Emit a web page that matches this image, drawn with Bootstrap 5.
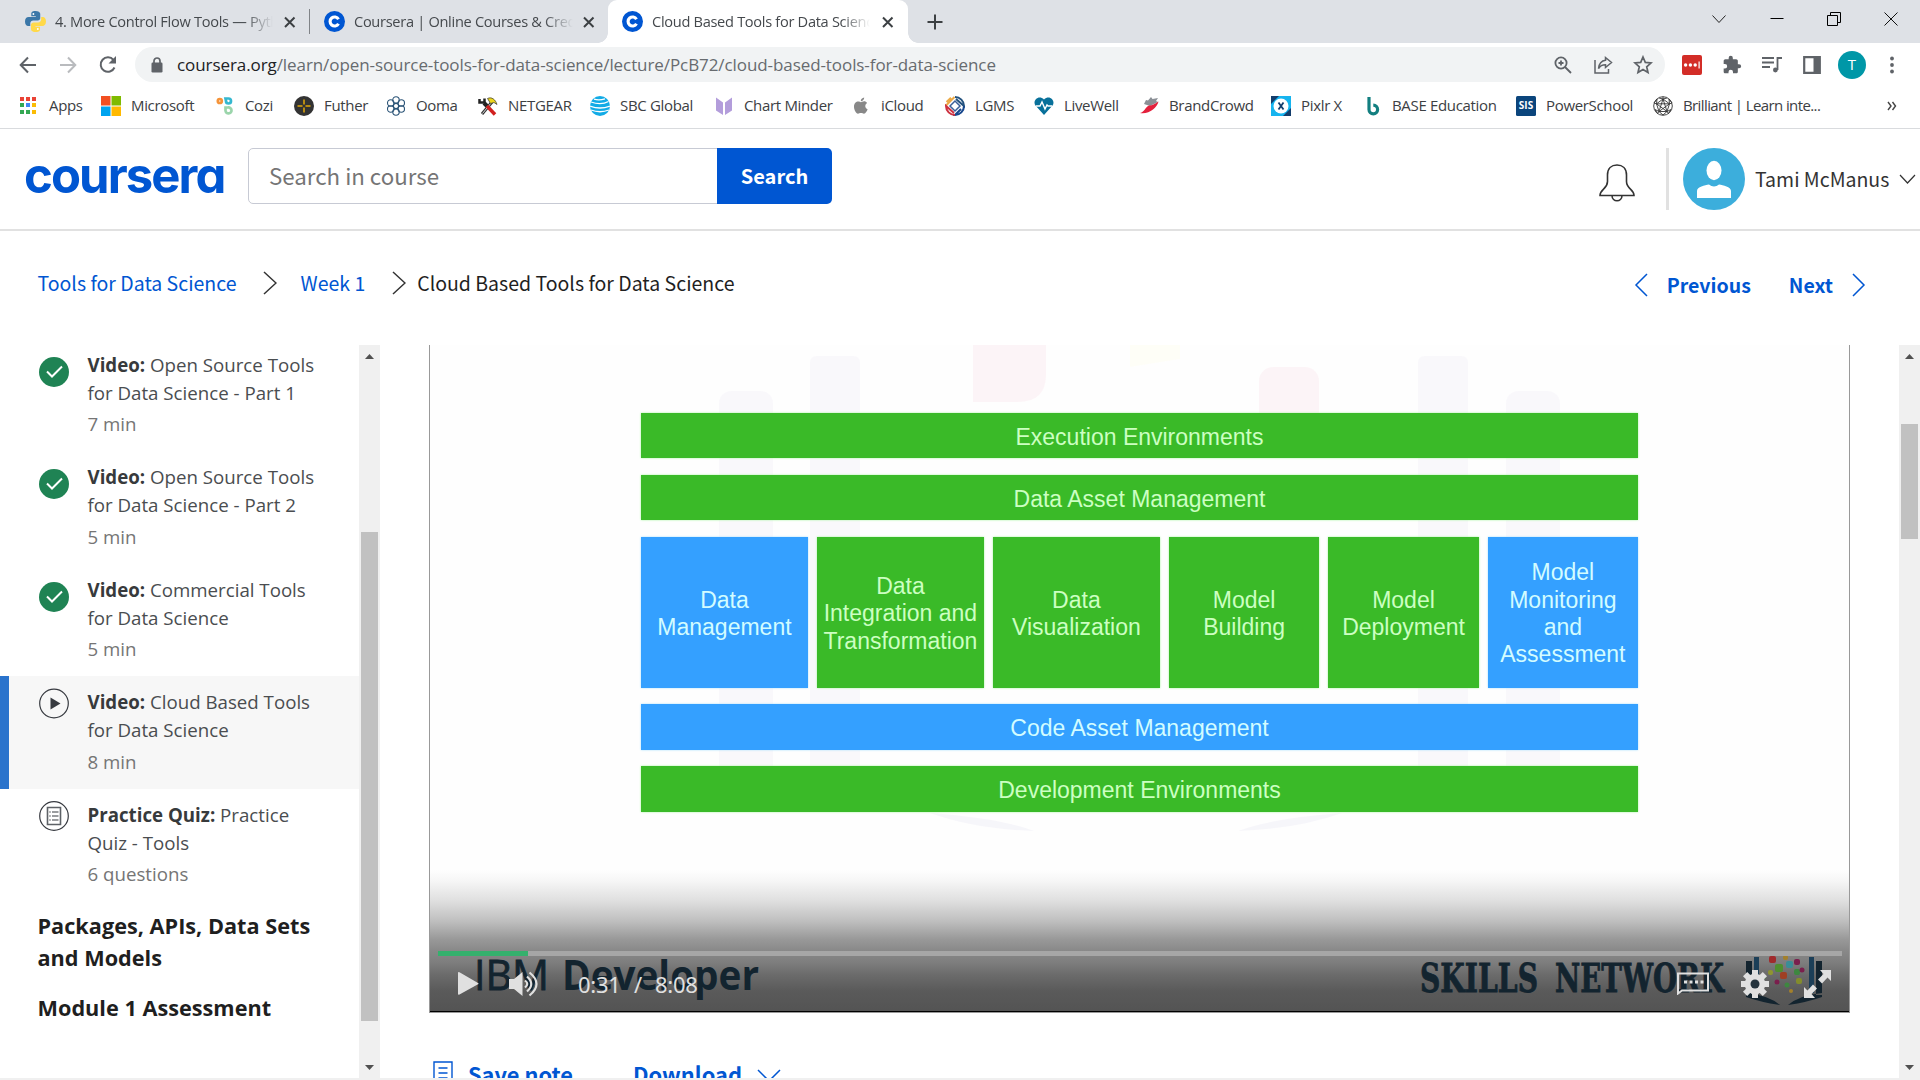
<!DOCTYPE html>
<html lang="en">
<head>
<meta charset="utf-8">
<title>Cloud Based Tools for Data Science | Coursera</title>
<link href="https://cdn.jsdelivr.net/npm/bootstrap@5.3.0/dist/css/bootstrap.min.css" rel="stylesheet">
<style>
  html, body { height: 1080px; overflow: hidden; }
  body { font-family: "Open Sans", sans-serif; background: #fff; color: #1f1f1f; }
  svg { display: block; flex: none; }
  a { text-decoration: none; }
  .source { font-family: "Noto Sans CJK SC", "Noto Sans", sans-serif; }

  /* browser tabs */
  .tabstrip { height: 43px; background: #dee1e6; }
  .tab { height: 43px; font-size: 14.6px; letter-spacing: -.3px; color: #45494d; }
  .tab-label { overflow: hidden; white-space: nowrap; -webkit-mask-image: linear-gradient(90deg, #000 87%, transparent); mask-image: linear-gradient(90deg, #000 87%, transparent); }
  .tab-a { width: 309px; padding-left: 25px; }
  .tab-a .tab-label { width: 218px; margin-left: 9px; margin-right: 7px; }
  .tab-b { width: 298px; padding-left: 14px; }
  .tab-b .tab-label { width: 219px; margin-left: 9px; margin-right: 6px; }
  .tab-on { width: 300px; padding-left: 14px; background: #fff; border-radius: 9px 9px 0 0; position: relative; }
  .tab-on::before, .tab-on::after { content: ""; position: absolute; bottom: 0; width: 10px; height: 10px; }
  .tab-on::before { left: -10px; background: radial-gradient(circle at 0 0, transparent 9.5px, #fff 10px); }
  .tab-on::after { right: -10px; background: radial-gradient(circle at 100% 0, transparent 9.5px, #fff 10px); }
  .tab-on .tab-label { width: 218px; margin-left: 9px; margin-right: 8px; }
  .tab-sep { width: 1px; height: 25px; background: #808387; }
  .win { width: 57.3px; height: 38px; }

  /* address row */
  .toolbar { height: 43px; padding-left: 8px; }
  .tool { width: 40px; height: 40px; }
  .omnibox { width: 1530px; height: 35px; border-radius: 18px; background: #f1f3f4; margin-right: 7px; margin-left: 7px; padding: 0 2px 0 15px; }
  .url { font-size: 17px; letter-spacing: -.08px; color: #676b6f; margin-left: 13px; padding-top: 1px; }
  .url b { font-weight: 400; color: #202124; }
  .profile { width: 28px; height: 28px; border-radius: 50%; background: #0097a7; color: #fff; font-size: 15px; }

  .bookmarks { height: 43px; padding-left: 19px; padding-bottom: 3px; border-bottom: 1px solid #d9dbde; font-size: 15px; letter-spacing: -.33px; color: #3c4043; }
  .bm { gap: 10px; white-space: nowrap; width: 82px; }
  .bm:nth-child(2) { width: 114px; } .bm:nth-child(3) { width: 79px; }
  .bm:nth-child(4), .bm:nth-child(5) { width: 92px; } .bm:nth-child(6) { width: 112px; }
  .bm:nth-child(7) { width: 124px; } .bm:nth-child(8) { width: 137px; }
  .bm:nth-child(9) { width: 94px; } .bm:nth-child(10) { width: 89px; }
  .bm:nth-child(11) { width: 105px; } .bm:nth-child(12) { width: 132px; }
  .bm:nth-child(13) { width: 91px; } .bm:nth-child(14) { width: 154px; }
  .bm:nth-child(15) { width: 137px; } .bm:nth-child(16) { width: 234px; letter-spacing: -.6px; }

  /* site header */
  .site-head { height: 102px; border-bottom: 2px solid #e1e1e1; padding-left: 24px; }
  .brand-word { font-family: Inter, sans-serif; font-feature-settings: "cv11"; font-weight: 700; font-size: 49px; letter-spacing: -1.9px; line-height: 60px; color: #0056d2; width: 224px; margin-top: -7px; }
  .search { width: 584px; height: 56px; margin-top: -6px; }
  .search .form-control { border: 1px solid #c7cad4; border-radius: 5px 0 0 5px; padding: 0 20px; font-size: 22.3px; color: #757575; }
  .search .form-control::placeholder { color: #757575; }
  .search .btn { width: 115px; background: #0056d2; color: #fff; font-weight: 700; font-size: 20px; border: 0; border-radius: 0 5px 5px 0; }
  .head-rule { width: 3px; height: 62px; background: #e1e1e1; margin: 0 14px 0 31px; }
  .bell { margin-top: 7px; }
  .user-name { font-size: 19.5px; color: #333; width: 144px; margin-left: 10px; white-space: nowrap; }

  .crumbs { height: 114px; padding: 0 54px 11px 37.5px; font-size: 19.5px; }
  .crumbs a { color: #0056d2; }
  .c2 { margin: 0 24px 0 26px; } .c4 { margin: 0 11px 0 27px; }
  .c6 { margin-left: 19px; } .c7 { margin: 0 19px 0 38px; }

  .panes { height: 733px; overflow: hidden; }
  .side { width: 359px; overflow: hidden; }
  .lesson { height: 112.5px; padding: 12.2px 20px 0 38.5px; font-size: 18.7px; line-height: 28.2px; color: #4a4d50; gap: 19px; white-space: nowrap; }
  .lesson:first-child { margin-top: -6.5px; }
  .lesson svg { margin-top: 6px; }
  .lesson .todo { margin-top: 0; }
  .lesson strong { color: #373a3c; font-weight: 700; }
  .lesson .meta { color: #757575; margin-top: 3px; }
  .lesson-on { background: #f7f7f7; border-left: 9px solid #2a73cc; padding-left: 29.5px; }
  .side-head { font-size: 21.7px; font-weight: 700; line-height: 32px; margin: 0 0 18px 37.5px; white-space: nowrap; }
  .side-head-first { padding-top: 9px; }
  .sbar { background: #f0f0f0; flex: none; width: 21px; }
  .thumb { background: #c1c1c1; width: 17px; }
  .sbar-l .thumb { height: 489px; } .sbar-r .thumb { height: 115px; }

  .watch { padding-left: 49px; }
  .player { width: 1421px; height: 668px; border: 1px solid #999; border-top: 0; background: #fefefe; position: relative; }
  .slide-art, .shade { position: absolute; left: 0; top: 0; }
  .slide-art { opacity: .5; }
  .shade { right: 0; bottom: 0; border-bottom: 1px solid #000; background: linear-gradient(180deg, transparent 525px, #f6f6f6 536px, #dfdfdf 556px, #bfbfbf 576px, #999 594px, #888 606px, #7e7e7e 617px, #6c6c6c 629px, #5a5a5a 646px, #545454 665px); }
  .diagram { position: relative; padding: 67.5px 211px 0; gap: 16.5px; font-family: "Liberation Sans", sans-serif; font-size: 23px; line-height: 27.4px; text-align: center; }
  .blk { background: #3aba28; color: #ccffc2; box-shadow: 0 0 2px #a6f5a0; padding-top: 4px; }
  .blk-blue { background: #34a0ff; color: #d2fcff; box-shadow: 0 0 2px #a5e0ff; }
  .band { height: 45.5px; }
  .cells { gap: 9.1px; height: 151px; }
  .cw { width: 167px; } .cn { width: 150.4px; }
  .controls { position: absolute; left: 0; right: 0; bottom: 1px; height: 60px; color: #e0e0e0; }
  .track { height: 5px; margin: 0 7px 0 8px; background: #a6a6a6; }
  .played { height: 5px; background: #35b06d; }
  .ctl { height: 55px; padding: 0 18px 0 28px; font-family: "Noto Sans", sans-serif; }
  .clock { font-size: 22px; letter-spacing: -.3px; white-space: pre; padding-top: 1px; }
  .k1 { margin-left: 30px; } .k2 { margin-left: 39px; width: 56px; } .k3 { width: 21px; } .k4 { width: 50px; }
  .k5 { margin-left: 32px; } .k6 { margin-left: 35px; }
  .actions { padding: 44px 0 0 4px; color: #0056d2; font-weight: 700; font-size: 21.8px; line-height: 33px; }
  .a0 { margin-top: 4px; } .a1 { margin-left: 15px; width: 165px; } .a2 { width: 124px; } .a3 { margin-top: 12px; }
  .foot { height: 2px; background: #f0f0f0; }
</style>
<script src="https://cdn.jsdelivr.net/npm/bootstrap@5.3.0/dist/js/bootstrap.bundle.min.js"></script>
</head>
<body class="d-flex flex-column">

<div class="tabstrip d-flex">
  <div class="tab tab-a d-flex align-items-center">
    <svg width="21" height="21" viewBox="0 0 20 20"><path fill="#3b77a8" d="M10 0C6.500 0 6 1.500 6 2.700V5h4.300v.8H3.500C1.500 5.800 0 7.200 0 10s1.300 4.300 3 4.300h2v-2.500c0-1.600 1.300-2.800 2.800-2.800h4.400c1.300 0 2.300-1.100 2.300-2.400V2.700C14.500 1 12.600 0 10 0z"/><path fill="#ffd94a" d="M10.300 20c3.500 0 4-1.500 4-2.700V15H10v-.8h6.500c2 0 3.500-1.400 3.500-4.200s-1.300-4.300-3-4.300h-1.600v2.500c0 1.600-1.300 2.800-2.800 2.800H8.200c-1.300 0-2.500 1.100-2.500 2.400v3.900c0 1.700 2 2.700 4.600 2.700z"/><circle cx="8" cy="2.800" r=".9" fill="#fff"/><circle cx="12.200" cy="17.200" r=".9" fill="#fff"/></svg>
    <span class="tab-label">4. More Control Flow Tools — Python 3</span>
    <svg width="20" height="20" viewBox="0 0 20 20" stroke="#3c4043" stroke-width="2"><path d="M5 5.500l9.500 9.500M14.500 5.500L5 15"/></svg>
  </div>
  <div class="tab-sep align-self-center"></div>
  <div class="tab tab-b d-flex align-items-center">
    <svg width="21" height="21" viewBox="0 0 20 20"><circle cx="10" cy="10" r="10" fill="#0056d2"/><path d="M13.800 12.200a4.300 4.300 0 1 1 0-4.400" fill="none" stroke="#fff" stroke-width="3"/></svg>
    <span class="tab-label">Coursera | Online Courses &amp; Credentials</span>
    <svg width="20" height="20" viewBox="0 0 20 20" stroke="#3c4043" stroke-width="2"><path d="M5 5.500l9.500 9.500M14.500 5.500L5 15"/></svg>
  </div>
  <div class="tab tab-on d-flex align-items-center">
    <svg width="21" height="21" viewBox="0 0 20 20"><circle cx="10" cy="10" r="10" fill="#0056d2"/><path d="M13.800 12.200a4.300 4.300 0 1 1 0-4.400" fill="none" stroke="#fff" stroke-width="3"/></svg>
    <span class="tab-label">Cloud Based Tools for Data Science</span>
    <svg width="20" height="20" viewBox="0 0 20 20" stroke="#3c4043" stroke-width="2"><path d="M5 5.500l9.500 9.500M14.500 5.500L5 15"/></svg>
  </div>
  <svg class="ms-3 align-self-center" width="22" height="22" viewBox="0 0 22 22" stroke="#3c4043" stroke-width="2"><path d="M11 3.500v15M3.500 11h15"/></svg>
  <div class="ms-auto d-flex">
    <div class="win d-flex align-items-center justify-content-center"><svg width="14" height="10" viewBox="0 0 14 10" fill="none" stroke="#222"><path d="M.5 1.500L7 8.500l6.500-7"/></svg></div>
    <div class="win d-flex align-items-center justify-content-center"><svg width="14" height="10" viewBox="0 0 14 10" stroke="#000"><path d="M.5 4.500h13"/></svg></div>
    <div class="win d-flex align-items-center justify-content-center"><svg width="14" height="14" viewBox="0 0 14 14" fill="none" stroke="#000"><path d="M.5 3.500h10v10H.5zM3.500 3V.5h10v10H11"/></svg></div>
    <div class="win d-flex align-items-center justify-content-center"><svg width="14" height="14" viewBox="0 0 14 14" stroke="#111"><path d="M.5.5l13 13M13.500.5l-13 13"/></svg></div>
  </div>
</div>

<div class="toolbar d-flex align-items-center">
  <div class="tool d-flex align-items-center justify-content-center"><svg width="18" height="18" viewBox="0 0 18 18" fill="none" stroke="#5f6368" stroke-width="2"><path d="M17 9H2M9 1.500L1.700 9 9 16.500"/></svg></div>
  <div class="tool d-flex align-items-center justify-content-center"><svg width="18" height="18" viewBox="0 0 18 18" fill="none" stroke="#b9bbbe" stroke-width="2"><path d="M1 9h15M9 1.500L16.300 9 9 16.500"/></svg></div>
  <div class="tool d-flex align-items-center justify-content-center"><svg width="20" height="20" viewBox="0 0 20 20"><path d="M16.500 12.500A7.200 7.200 0 1 1 15.500 5" fill="none" stroke="#5f6368" stroke-width="2"/><path d="M18 1v7.500h-7.500z" fill="#5f6368"/></svg></div>
  <div class="omnibox d-flex align-items-center">
    <svg width="14" height="16" viewBox="0 0 14 16"><rect x="1.500" y="5.500" width="11" height="10" rx="1.200" fill="#5f6368"/><path d="M4 6V4a3 3 0 0 1 6 0v2" fill="none" stroke="#5f6368" stroke-width="1.700"/></svg>
    <span class="url flex-grow-1"><b>coursera.org</b>/learn/open-source-tools-for-data-science/lecture/PcB72/cloud-based-tools-for-data-science</span>
    <div class="tool d-flex align-items-center justify-content-center"><svg width="18" height="18" viewBox="0 0 18 18" fill="none" stroke="#5f6368" stroke-width="1.800"><circle cx="7" cy="7" r="5.600"/><path d="M11 11l6 6M7 4.500v5M4.500 7h5"/></svg></div>
    <div class="tool d-flex align-items-center justify-content-center"><svg width="20" height="20" viewBox="0 0 20 20" fill="none" stroke="#5f6368" stroke-width="1.500"><path d="M2 5v13h13.500v-4M12.500 2.500l6 5-6 5V9.800C9 9.800 7 11 5.500 13.500 6 9 8.500 5.800 12.500 5.300z"/></svg></div>
    <div class="tool d-flex align-items-center justify-content-center"><svg width="20" height="20" viewBox="0 0 20 20" fill="none" stroke="#5f6368" stroke-width="1.700"><path d="M10 2l2.300 5.400 5.800.5-4.400 3.900 1.300 5.700-5-3-5 3 1.300-5.700L1.900 7.900l5.800-.5z"/></svg></div>
  </div>
  <div class="tool d-flex align-items-center justify-content-center"><svg width="20" height="20" viewBox="0 0 20 20"><rect width="20" height="20" rx="2" fill="#d32d27"/><g fill="#fff"><circle cx="3.600" cy="10" r="1.700"/><circle cx="8.400" cy="10" r="1.700"/><circle cx="13.200" cy="10" r="1.700"/><rect x="16.500" y="6.500" width="1.200" height="7"/></g></svg></div>
  <div class="tool d-flex align-items-center justify-content-center"><svg width="20" height="20" viewBox="0 0 24 24" fill="#5f6368"><path d="M20.500 11H19V7c0-1.100-.9-2-2-2h-4V3.500a2.500 2.500 0 0 0-5 0V5H4c-1.100 0-2 .9-2 2v3.800h1.500a2.700 2.700 0 0 1 0 5.400H2V20c0 1.100.9 2 2 2h3.800v-1.500a2.700 2.700 0 0 1 5.400 0V22H17c1.100 0 2-.9 2-2v-4h1.500a2.500 2.500 0 0 0 0-5z"/></svg></div>
  <div class="tool d-flex align-items-center justify-content-center"><svg width="20" height="20" viewBox="0 0 20 20" fill="none" stroke="#5f6368" stroke-width="1.800"><path d="M0 3h12M0 7.500h12M0 12h8M15.500 15V3h4.500"/><circle cx="13.400" cy="15" r="2.400" fill="#5f6368" stroke="none"/></svg></div>
  <div class="tool d-flex align-items-center justify-content-center"><svg width="18" height="18" viewBox="0 0 18 18"><path d="M1.200 1.200h15.600v15.600H1.200z" fill="none" stroke="#5f6368" stroke-width="2.200"/><path d="M10.500 1h6.500v16h-6.500z" fill="#5f6368"/></svg></div>
  <div class="tool d-flex align-items-center justify-content-center"><div class="profile d-flex align-items-center justify-content-center">T</div></div>
  <div class="tool d-flex align-items-center justify-content-center"><svg width="4" height="18" viewBox="0 0 4 18" fill="#5f6368"><circle cx="2" cy="2.500" r="1.900"/><circle cx="2" cy="9" r="1.900"/><circle cx="2" cy="15.500" r="1.900"/></svg></div>
</div>

<div class="bookmarks d-flex align-items-center">
  <div class="bm d-flex align-items-center"><svg width="20" height="20" viewBox="0 0 20 20"><path fill="#ea4335" d="M1 1h4v4H1zM7 1h4v4H7zM13 1h4v4h-4z"/><path fill="#34a853" d="M1 7h4v4H1zM1 14h4v4H1zM7 14h4v4H7z"/><path fill="#4285f4" d="M7 7h4v4H7z"/><path fill="#fbbc05" d="M13 7h4v4h-4zM13 14h4v4h-4z"/></svg>Apps</div>
  <div class="bm d-flex align-items-center"><svg width="20" height="20" viewBox="0 0 20 20"><path fill="#f25022" d="M0 0h9.500v9.500H0z"/><path fill="#7fba00" d="M10.500 0H20v9.500h-9.500z"/><path fill="#00a4ef" d="M0 10.500h9.500V20H0z"/><path fill="#ffb900" d="M10.500 10.500H20V20h-9.500z"/></svg>Microsoft</div>
  <div class="bm d-flex align-items-center"><svg width="20" height="20" viewBox="0 0 20 20" fill="none" stroke-width="2.700"><circle cx="4.800" cy="5" r="2" stroke="#f5943a"/><path d="M10.500 2.500h3a2.500 2.500 0 1 1-2.500 2.500z" stroke="#35b8d0"/><path d="M10.500 11.500h2.500a3 3 0 1 1-2.500 3z" stroke="#9bd5ab"/></svg>Cozi</div>
  <div class="bm d-flex align-items-center"><svg width="20" height="20" viewBox="0 0 20 20"><circle cx="10" cy="10" r="10" fill="#333"/><path d="M10 3.500v5M10 11.500v5M3.500 10h5M11.500 10h5" stroke="#e3a908" stroke-width="1.500"/></svg>Futher</div>
  <div class="bm d-flex align-items-center"><svg width="20" height="20" viewBox="0 0 20 20" fill="none" stroke="#2b5477" stroke-width="1.100"><circle cx="10" cy="10" r="2.600"/><circle cx="10" cy="3.900" r="3.200"/><circle cx="10" cy="16.100" r="3.200"/><circle cx="4.700" cy="7" r="3.200"/><circle cx="15.300" cy="7" r="3.200"/><circle cx="4.700" cy="13" r="3.200"/><circle cx="15.300" cy="13" r="3.200"/></svg>Ooma</div>
  <div class="bm d-flex align-items-center"><svg width="20" height="20" viewBox="0 0 20 20" fill="none"><path d="M4 18L14 6" stroke="#333" stroke-width="3"/><path d="M4.500 17.500L13.500 6.500" stroke="#ddd" stroke-width="1"/><path d="M6 7l3 3" stroke="#222" stroke-width="4"/><path d="M9 10l8 8.500" stroke="#d1201f" stroke-width="3.500"/><path d="M1.500 3v3.500h5V2.500" stroke="#222" stroke-width="2.500"/><path d="M9.500 2.500c4-2 8 1 9.500 6l-3-2-3.500 1z" fill="#ecd51c" stroke="#333" stroke-width=".7"/></svg>NETGEAR</div>
  <div class="bm d-flex align-items-center"><svg width="20" height="20" viewBox="0 0 20 20"><circle cx="10" cy="10" r="10" fill="#12abe6"/><path d="M1 6q10 3.500 17.500-.5M0 10q10 4 20 0M1 14q9 3.500 18 0M4 3.200q5 1.500 11-.3" fill="none" stroke="#fff" stroke-width="1.300"/></svg>SBC Global</div>
  <div class="bm d-flex align-items-center"><svg width="20" height="20" viewBox="0 0 20 20" fill="#b39ddb"><path d="M2 1.500l7 5V19l-7-4.500zM18 1.500l-7 5V19l7-4.500z"/></svg>Chart Minder</div>
  <div class="bm d-flex align-items-center"><svg width="20" height="20" viewBox="0 0 20 20" fill="#888"><path d="M13.200 1.500c.1 2-1.500 3.700-3.400 3.700C9.600 3.300 11.300 1.700 13.200 1.500zM9.900 6.200c.7 0 1.700-.9 3.200-.9 1.200 0 2.300.6 3 1.700-2.700 1.600-2.200 5.200.5 6.300-.6 1.700-2 4.400-3.600 4.400-1.200 0-1.500-.7-3-.7s-1.900.7-3 .7C5 17.700 3 13.800 3 10.800c0-3.400 2.200-5.200 4.200-5.200 1.200 0 2 .6 2.700.6z"/></svg>iCloud</div>
  <div class="bm d-flex align-items-center"><svg width="20" height="20" viewBox="0 0 20 20" fill="none" stroke-width="2"><path d="M1 9.500L9.500 1M1.500 6L6 1.800" stroke="#ecaa47"/><path d="M10 1a9 9 0 0 1 9 9L11 3" stroke="#24527e"/><path d="M19 10a9 9 0 0 1-9 9l6-6" stroke="#17478d"/><path d="M10 19a9 9 0 0 1-9-9l8 7" stroke="#cd3241"/><path d="M5 10l5-5 5 5-5 5z" stroke="#3a5f99" stroke-width="1.500"/></svg>LGMS</div>
  <div class="bm d-flex align-items-center"><svg width="20" height="20" viewBox="0 0 20 20"><path d="M10 19L1.500 9.500C-2 5 4.500-2 10 3.500 15.500-2 22 5 18.500 9.500z" fill="#08709a"/><path d="M2 10h4l2-4 3 7 2-4 1 1h4" fill="none" stroke="#fff" stroke-width="1.400"/></svg>LiveWell</div>
  <div class="bm d-flex align-items-center"><svg width="20" height="20" viewBox="0 0 20 20"><path d="M5 8l2-4 2 .5L12 1l1.500 2L19 2l-2 3 2 1-8 4z" fill="#8b9096"/><path d="M1 17c5-1 5-6 9-7.500 2 .5 5-1 9.500-4C18 12 10 18.500 1 17z" fill="#e4203c"/></svg>BrandCrowd</div>
  <div class="bm d-flex align-items-center"><svg width="20" height="20" viewBox="0 0 20 20"><path d="M0 0h20v20H0z" fill="#16b4ef"/><path d="M0 0h8L0 8zM12 20h8v-8z" fill="#133d6c"/><circle cx="10" cy="10" r="7.500" fill="#fff"/><path d="M7.500 6.500l5 7M12.500 6.500l-5 7" stroke="#133d6c" stroke-width="1.800"/></svg>Pixlr X</div>
  <div class="bm d-flex align-items-center"><svg width="20" height="20" viewBox="0 0 20 20" fill="none" stroke="#137f80" stroke-width="3.200"><path d="M7 1v12.500a4.300 4.300 0 1 0 4.300-4.300"/></svg>BASE Education</div>
  <div class="bm d-flex align-items-center"><svg width="20" height="20" viewBox="0 0 20 20"><rect width="20" height="20" rx="1.500" fill="#0b457c"/><text x="10" y="13.400" text-anchor="middle" font-family="Open Sans" font-weight="700" font-size="10" letter-spacing="0" fill="#fff">SIS</text></svg>PowerSchool</div>
  <div class="bm d-flex align-items-center"><svg width="20" height="20" viewBox="0 0 20 20" fill="none" stroke="#333" stroke-width=".9"><circle cx="10" cy="10" r="9.300"/><path d="M10 3l6.500 4.800L14 15.500H6L3.500 7.800zM10 .7V3l-4-1M10 3l4-1M16.500 7.800l2.500-.8-3-4zM14 15.500l1.500 2 2.500-4zM6 15.500l-1.500 2-2.500-4zM3.500 7.800L1 7l3-4zM10 3L6 15.500l10.500-7.700h-13L14 15.500zM6 15.500l4 3.500 4-3.500"/></svg>Brilliant | Learn inte...</div>
  <svg width="10" height="10" viewBox="0 0 10 10" fill="none" stroke="#444" stroke-width="1.400"><path d="M1 1l3 4-3 4M5.500 1l3 4-3 4"/></svg>
</div>

<header class="site-head d-flex align-items-center">
  <a class="brand-word" href="#">coursera</a>
  <div class="search input-group source">
    <input class="form-control" type="text" placeholder="Search in course">
    <button class="btn" type="button">Search</button>
  </div>
  <div class="ms-auto d-flex align-items-center">
    <svg class="bell" width="36" height="38" viewBox="0 0 36 38" fill="none" stroke="#333" stroke-width="1.600"><path d="M1 31.500C1 25 8.500 25 8.500 17.500V11C8.500 4.500 12.500 1 18 1s9.500 3.500 9.500 10v6.500C27.500 25 35 25 35 31.500zM13 31.500c0 7 10 7 10 0"/></svg>
    <div class="head-rule"></div>
    <svg width="62" height="62" viewBox="0 0 62 62"><circle cx="31" cy="31" r="31" fill="#3caedc"/><ellipse cx="31" cy="22.500" rx="7.500" ry="9.700" fill="#fff"/><path d="M14 50V43c0-4 8-6 12-6.500 3 2.500 7 2.500 10 0C40 37 48 39 48 43v7z" fill="#fff"/></svg>
    <span class="user-name source">Tami McManus</span>
    <svg class="me-1" width="17" height="10" viewBox="0 0 17 10" fill="none" stroke="#333" stroke-width="1.200"><path d="M1 1l7.500 8L16 1"/></svg>
  </div>
</header>

<nav class="crumbs source d-flex align-items-center">
  <a class="c1" href="#">Tools for Data Science</a>
  <svg class="c2" width="14" height="24" viewBox="0 0 14 24" fill="none" stroke="#333" stroke-width="1.500"><path d="M1 1l12 11L1 23"/></svg>
  <a class="c3" href="#">Week 1</a>
  <svg class="c4" width="14" height="24" viewBox="0 0 14 24" fill="none" stroke="#333" stroke-width="1.500"><path d="M1 1l12 11L1 23"/></svg>
  <span class="c5">Cloud Based Tools for Data Science</span>
  <div class="ms-auto pt-1 d-flex align-items-center fw-bold">
    <svg width="14" height="24" viewBox="0 0 14 24" fill="none" stroke="#0056d2" stroke-width="1.500"><path d="M13 1L2 12l11 11"/></svg>
    <a class="c6" href="#">Previous</a>
    <a class="c7" href="#">Next</a>
    <svg width="14" height="24" viewBox="0 0 14 24" fill="none" stroke="#0056d2" stroke-width="1.500"><path d="M1 1l11 11L1 23"/></svg>
  </div>
</nav>

<div class="panes d-flex">
  <aside class="side flex-shrink-0">
    <div class="lesson d-flex"><svg width="30" height="30" viewBox="0 0 30 30"><circle cx="15" cy="15" r="15" fill="#1f8354"/><path d="M8 14.500l5 5L23 9.500" fill="none" stroke="#fff" stroke-width="2"/></svg><div><strong>Video:</strong> Open Source Tools<br>for Data Science - Part 1<div class="meta">7 min</div></div></div>
    <div class="lesson d-flex"><svg width="30" height="30" viewBox="0 0 30 30"><circle cx="15" cy="15" r="15" fill="#1f8354"/><path d="M8 14.500l5 5L23 9.500" fill="none" stroke="#fff" stroke-width="2"/></svg><div><strong>Video:</strong> Open Source Tools<br>for Data Science - Part 2<div class="meta">5 min</div></div></div>
    <div class="lesson d-flex"><svg width="30" height="30" viewBox="0 0 30 30"><circle cx="15" cy="15" r="15" fill="#1f8354"/><path d="M8 14.500l5 5L23 9.500" fill="none" stroke="#fff" stroke-width="2"/></svg><div><strong>Video:</strong> Commercial Tools<br>for Data Science<div class="meta">5 min</div></div></div>
    <div class="lesson lesson-on d-flex"><svg class="todo" width="30" height="31" viewBox="0 0 30 31"><circle cx="15" cy="15.500" r="14.300" fill="none" stroke="#373a40" stroke-width="1.200"/><path d="M11.500 9.500l10 6-10 6z" fill="#373a40"/></svg><div><strong>Video:</strong> Cloud Based Tools<br>for Data Science<div class="meta">8 min</div></div></div>
    <div class="lesson d-flex"><svg class="todo" width="30" height="30" viewBox="0 0 30 30" fill="none" stroke="#373a40"><circle cx="15" cy="15" r="14.300" stroke-width="1.200"/><path d="M8.500 6.500h13v17h-13z" stroke="#5d6166" stroke-width="1.600"/><path d="M13 11h6.500M13 15h6.500M13 19h6.500M10.300 11h1.400M10.300 15h1.400M10.300 19h1.400" stroke-width="1.200"/></svg><div><strong>Practice Quiz:</strong> Practice<br>Quiz - Tools<div class="meta">6 questions</div></div></div>
    <div class="side-head side-head-first">Packages, APIs, Data Sets<br>and Models</div>
    <div class="side-head">Module 1 Assessment</div>
  </aside>
  <div class="sbar sbar-l d-flex flex-column align-items-center">
    <svg width="21" height="187" viewBox="0 0 21 187"><path d="M6 14l4.500-5 4.500 5z" fill="#505050"/></svg>
    <div class="thumb"></div>
    <svg class="mt-auto" width="21" height="20" viewBox="0 0 21 20"><path d="M6 7l4.500 5L15 7z" fill="#505050"/></svg>
  </div>
  <main class="watch flex-grow-1">
    <div class="player">
      <svg class="slide-art" width="1419" height="500" viewBox="0 0 1419 500">
        <g fill="#f6f4fa"><rect x="289" y="46" width="54" height="420" rx="12"/><rect x="380" y="11" width="50" height="420" rx="6"/><rect x="988" y="11" width="50" height="420" rx="6"/><rect x="1076" y="46" width="54" height="420" rx="12"/></g>
        <path d="M543 0h73v30q0 27-28 27h-45z" fill="#fbecf1"/><rect x="829" y="22" width="60" height="80" rx="14" fill="#fbecf1"/><path d="M700 0h50v14l-50 8z" fill="#fffef2"/>
        <path d="M500 468q70 5 104 18-60-2-104-18zM912 468q-70 5-104 18 60-2 104-18z" fill="#f0eff7"/>
      </svg>
      <div class="diagram d-flex flex-column">
        <div class="blk band d-flex align-items-center justify-content-center">Execution Environments</div>
        <div class="blk band d-flex align-items-center justify-content-center">Data Asset Management</div>
        <div class="cells d-flex">
          <div class="blk blk-blue cw d-flex align-items-center justify-content-center">Data<br>Management</div>
          <div class="blk cw d-flex align-items-center justify-content-center">Data<br>Integration and<br>Transformation</div>
          <div class="blk cw d-flex align-items-center justify-content-center">Data<br>Visualization</div>
          <div class="blk cn d-flex align-items-center justify-content-center">Model<br>Building</div>
          <div class="blk cn d-flex align-items-center justify-content-center">Model<br>Deployment</div>
          <div class="blk blk-blue cn d-flex align-items-center justify-content-center">Model<br>Monitoring<br>and<br>Assessment</div>
        </div>
        <div class="blk blk-blue band d-flex align-items-center justify-content-center">Code Asset Management</div>
        <div class="blk band d-flex align-items-center justify-content-center">Development Environments</div>
      </div>
      <div class="shade">
        <svg width="1419" height="666" viewBox="0 0 1419 666" fill="#13242f">
          <g font-family="Open Sans" font-size="42"><text x="44" y="645" stroke="#13242f" stroke-width=".8" textLength="75" lengthAdjust="spacingAndGlyphs">IBM</text><text x="132" y="645" font-weight="700" textLength="197" lengthAdjust="spacingAndGlyphs">Developer</text></g>
          <g font-family="DejaVu Serif" font-weight="700" font-size="40" stroke="#13242f" stroke-width=".9"><text x="990" y="647" textLength="118" lengthAdjust="spacingAndGlyphs">SKILLS</text><text x="1125" y="647" textLength="169" lengthAdjust="spacingAndGlyphs">NETWORK</text></g>
          <path d="M1316 616h6v34h-6zM1386 616h6v34h-6zM1316 648q22 2 34 12-20-3-34-8zM1392 648q-22 2-34 12 20-3 34-8z"/><path d="M1324 612h5v36h-5zM1379 612h5v36h-5z" fill="#1c3f58"/>
          <g><rect x="1339" y="611" width="7" height="7" rx="2" fill="#a02a2c"/><rect x="1353" y="610" width="5" height="5" rx="2" fill="#a3802b"/><rect x="1364" y="614" width="6" height="6" rx="2" fill="#7a1f4d"/><rect x="1345" y="619" width="8" height="8" rx="2" fill="#4f8f2f"/><rect x="1356" y="616" width="7" height="7" rx="2" fill="#3a8d96"/><rect x="1364" y="624" width="6" height="6" rx="2" fill="#3e8740"/><rect x="1350" y="627" width="7" height="7" rx="2" fill="#9f4024"/><rect x="1338" y="625" width="5" height="5" rx="2" fill="#8f9530"/><rect x="1366" y="633" width="6" height="6" rx="2" fill="#838c2c"/><circle cx="1347" cy="637" r="2.500" fill="#7a1f4d"/><circle cx="1372" cy="625" r="2.500" fill="#7a1f4d"/><circle cx="1357" cy="640" r="2.500" fill="#3e8740"/><circle cx="1361" cy="646" r="2" fill="#a3802b"/><circle cx="1334" cy="632" r="2" fill="#3e8740"/></g>
        </svg>
      </div>
      <div class="controls">
        <div class="track"><div class="played" style="width:6.420%"></div></div>
        <div class="ctl d-flex align-items-center">
          <svg width="21" height="23" viewBox="0 0 21 23" fill="#e0e0e0"><path d="M0 1q0-1.500 1.500-.7L20 11q1 .7 0 1.200L1.500 22.500Q0 23 0 22z"/></svg>
          <svg class="k1" width="30" height="26" viewBox="0 0 30 26" fill="none" stroke="#e0e0e0" stroke-width="2.200"><path d="M0 8h5L13.500 1v24L5 18H0z" fill="#e0e0e0" stroke="none"/><path d="M16 9.500q4.500 3.500 0 7M18 5.500q8.500 7.500 0 15M20.500 1.500q14 11.500 0 23"/></svg>
          <span class="clock k2">0:31</span><span class="clock k3">/</span><span class="clock k4">8:08</span>
          <svg class="ms-auto" width="32" height="23" viewBox="0 0 32 23" fill="none" stroke="#e0e0e0" stroke-width="2"><path d="M1 21.500V1.500h30v17H5z"/><path d="M7 10h3M12.500 10h3M18 10h3M23.500 10h3" stroke-width="3"/></svg>
          <svg class="k5" width="28" height="28" viewBox="-14 -14 28 28" fill="#e0e0e0"><path d="M-3-14h6v28h-6z"/><path d="M-3-14h6v28h-6z" transform="rotate(45)"/><path d="M-3-14h6v28h-6z" transform="rotate(90)"/><path d="M-3-14h6v28h-6z" transform="rotate(135)"/><circle r="10.300"/><circle r="4.500" fill="#24343e"/></svg>
          <svg class="k6" width="27" height="28" viewBox="0 0 27 28"><path d="M16 0h11v11l-3.500-3.500L18 13.500l-4-4L19.500 4zM11 28H0V17l3.500 3.500L9 14.500l4 4L7.500 24z" fill="#e0e0e0"/></svg>
        </div>
      </div>
    </div>
    <div class="actions source d-flex align-items-start">
      <svg class="a0" width="20" height="26" viewBox="0 0 20 26" fill="none" stroke="#0056d2" stroke-width="1.400"><path d="M1 1h18v24H1zM5.500 7h9M5.500 12h9M5.500 17h9"/></svg>
      <span class="a1">Save note</span><span class="a2">Download</span>
      <svg class="a3" width="24" height="13" viewBox="0 0 24 13" fill="none" stroke="#0056d2" stroke-width="1.500"><path d="M1 1l11 11L23 1"/></svg>
    </div>
  </main>
  <div class="sbar sbar-r d-flex flex-column align-items-center">
    <svg width="21" height="79" viewBox="0 0 21 79"><path d="M6 14l4.500-5 4.500 5z" fill="#505050"/></svg>
    <div class="thumb"></div>
    <svg class="mt-auto" width="21" height="20" viewBox="0 0 21 20"><path d="M6 7l4.500 5L15 7z" fill="#505050"/></svg>
  </div>
</div>
<div class="foot"></div>
</body>
</html>
